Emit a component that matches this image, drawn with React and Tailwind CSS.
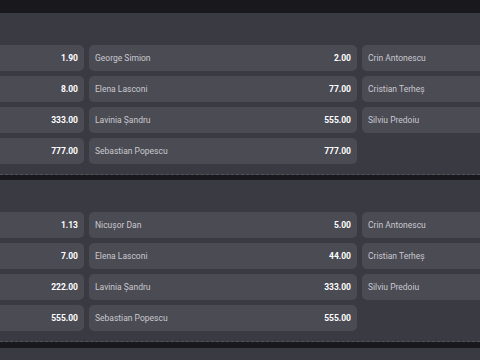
import React from "react";

const panels = [
  {
    rows: [
      [["", "1.90"], ["George Simion", "2.00"], ["Crin Antonescu", null]],
      [["", "8.00"], ["Elena Lasconi", "77.00"], ["Cristian Terheș", null]],
      [["", "333.00"], ["Lavinia Șandru", "555.00"], ["Silviu Predoiu", null]],
      [["", "777.00"], ["Sebastian Popescu", "777.00"], null],
    ],
  },
  {
    rows: [
      [["", "1.13"], ["Nicușor Dan", "5.00"], ["Crin Antonescu", null]],
      [["", "7.00"], ["Elena Lasconi", "44.00"], ["Cristian Terheș", null]],
      [["", "222.00"], ["Lavinia Șandru", "333.00"], ["Silviu Predoiu", null]],
      [["", "555.00"], ["Sebastian Popescu", "555.00"], null],
    ],
  },
];

function Cell({ cell }) {
  if (!cell) return <div className="w-[268px] h-[26px] shrink-0" />;
  const [name, odd] = cell;
  return (
    <div className="w-[268px] h-[26px] shrink-0 rounded-[5px] bg-[#4b4b54] flex items-center justify-between px-[6px]">
      <span className="text-[8.5px] text-[#c9c9ce]">{name}</span>
      {odd && <span className="text-[8.5px] font-bold text-white">{odd}</span>}
    </div>
  );
}

function Panel({ panel }) {
  return (
    <div className="shrink-0 bg-[#3a3a42] border-b border-dashed border-[#52525a] pt-[32px] pb-[10px] overflow-hidden">
      <div className="flex flex-col gap-[5px] ml-[-184px]">
        {panel.rows.map((row, i) => (
          <div key={i} className="flex gap-[5px]">
            {row.map((c, j) => (
              <Cell key={j} cell={c} />
            ))}
          </div>
        ))}
      </div>
    </div>
  );
}

export default function App() {
  return (
    <div
      className="w-[480px] h-[360px] overflow-hidden bg-[#19191d] pt-[13px] flex flex-col gap-[5px]"
      style={{ fontFamily: "Roboto, 'Liberation Sans', sans-serif" }}
    >
      {panels.map((p, i) => (
        <Panel key={i} panel={p} />
      ))}
      <div className="bg-[#3a3a42] h-[40px] shrink-0 mt-[1px]" />
    </div>
  );
}
